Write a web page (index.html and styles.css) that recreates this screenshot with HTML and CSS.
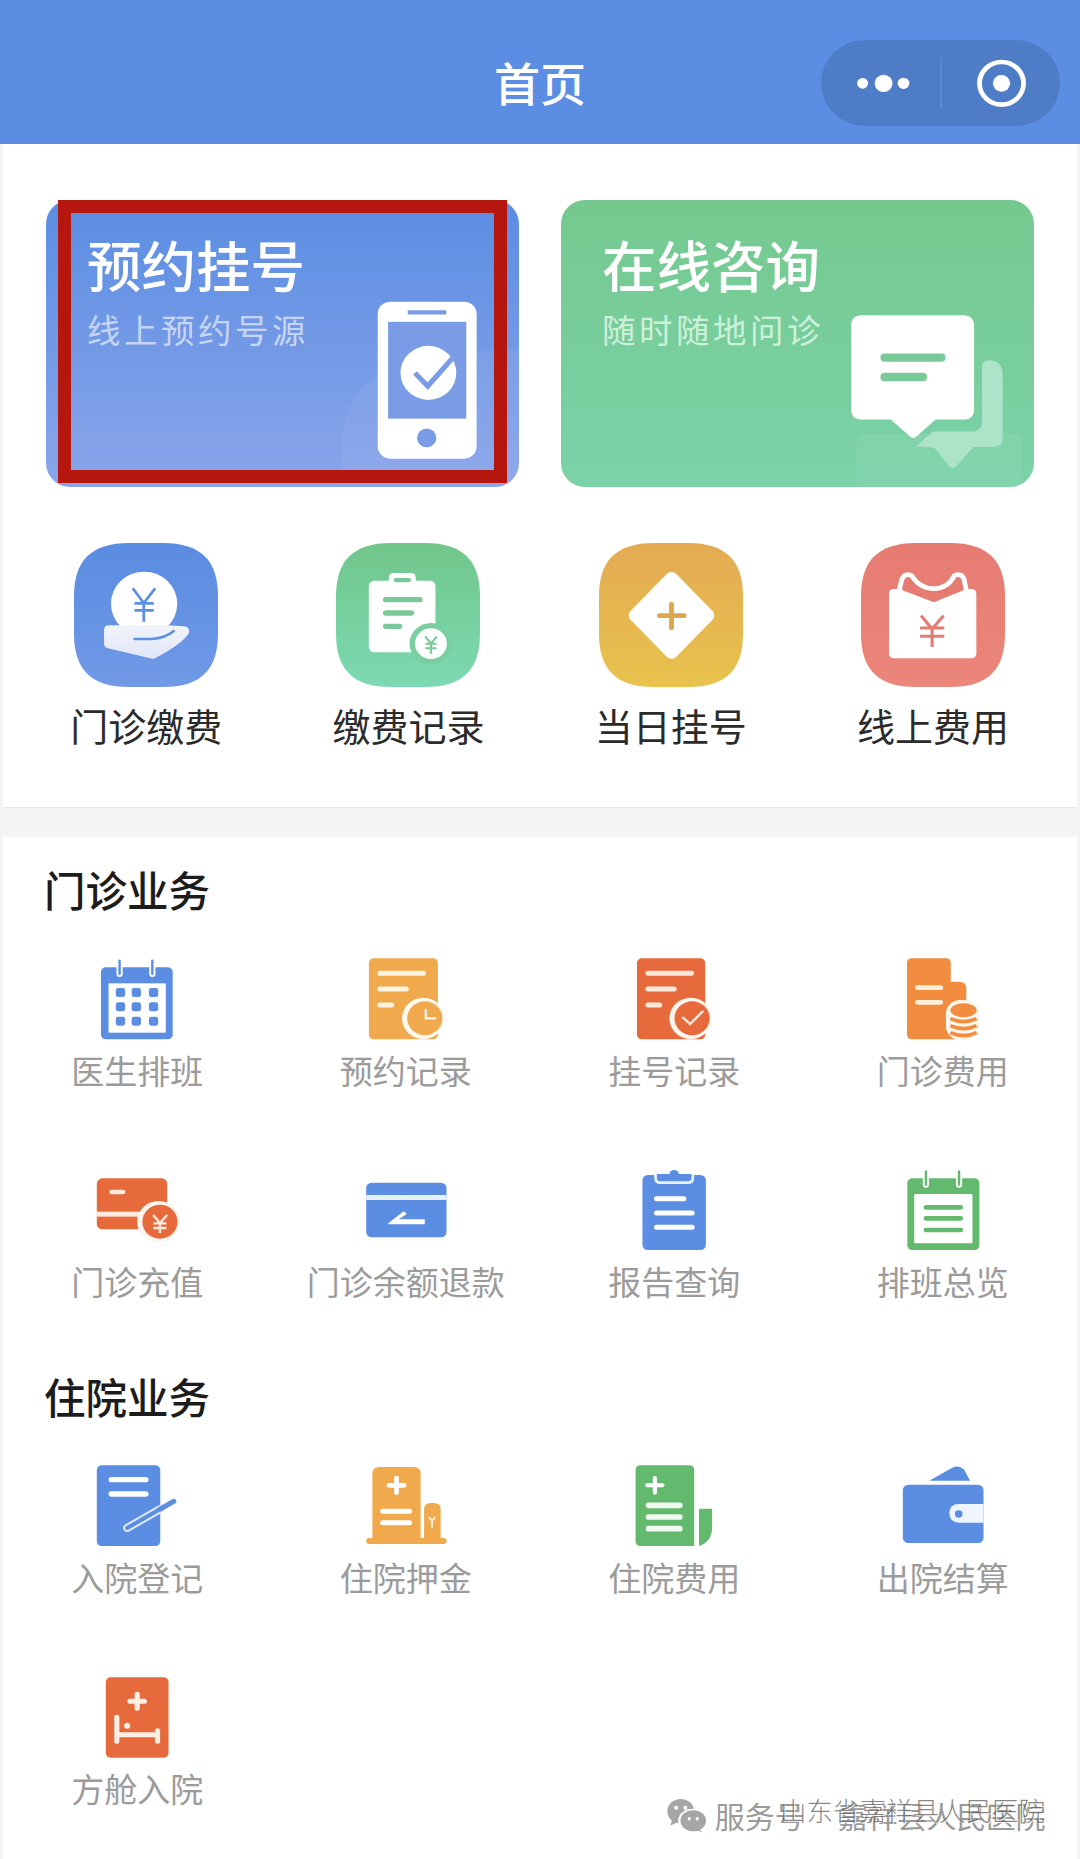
FILE: index.html
```html
<!DOCTYPE html>
<html lang="zh-CN">
<head>
<meta charset="utf-8">
<title>首页</title>
<link rel="stylesheet" href="styles.css">
</head>
<body>
<header class="topbar">
  <h1 class="topbar-title">首页</h1>
  <svg class="capsule" viewBox="815 120 695 258" preserveAspectRatio="none" aria-hidden="true">
    <rect x="815" y="120" width="695" height="258" rx="129" fill="#4e7cc7"/>
    <circle cx="936" cy="250" r="16" fill="#fff"/>
    <circle cx="997" cy="250" r="26" fill="#fff"/>
    <circle cx="1055" cy="250" r="17" fill="#fff"/>
    <rect x="1163" y="172" width="3" height="153" fill="#6c93d3"/>
    <circle cx="1340" cy="250" r="64" fill="none" stroke="#fff" stroke-width="14"/>
    <circle cx="1340" cy="250" r="25" fill="#fff"/>
  </svg>
</header>

<main class="page">
  <section class="panel panel-top">
    <div class="cards">
      <a class="card card-blue">
        <svg class="card-art" viewBox="135 600 1373 860" preserveAspectRatio="none" aria-hidden="true">
          <path d="M995 1450v-140q10-110 70-160 70-70 170-85 130-10 273-20v405z" fill="#fff" opacity=".05"/>
          <rect x="1098" y="905" width="287" height="470" rx="36" fill="#fff"/>
          <rect x="1128" y="965" width="227" height="290" fill="#7a9ce6"/>
          <rect x="1185" y="930" width="112" height="13" rx="3" fill="#7a9ce6"/>
          <circle cx="1240" cy="1313" r="28" fill="#7a9ce6"/>
          <circle cx="1245" cy="1118" r="81" fill="#fff"/>
          <path d="M1206 1118l37 40 72-84" fill="none" stroke="#7a9ce6" stroke-width="15"/>
        </svg>
        <h2 class="card-title">预约挂号</h2>
        <p class="card-sub">线上预约号源</p>
        <span class="card-mark"></span>
      </a>
      <a class="card card-green">
        <svg class="card-art" viewBox="62 600 1374 860" preserveAspectRatio="none" aria-hidden="true">
          <path d="M920 1460v-130q0-30 30-30h450v160z" fill="#fff" opacity=".06"/>
          <path d="M1285 1100q0-20 20-20 40 0 40 45v190q0 25-25 25h-60l-50 58q-10 8-20 0l-42-54q-15-6-55-4 30-30 50-46h110q32 0 32-32z" fill="#ade3c8"/>
          <path d="M935 945h295q32 0 32 32v250q0 31-32 31h-80l-55 50q-10 10-20 0l-55-50H935q-30 0-30-31V977q0-32 30-32z" fill="#fff"/>
          <rect x="990" y="1060" width="189" height="25" rx="12" fill="#79ca98"/>
          <rect x="990" y="1118" width="135" height="25" rx="12" fill="#79ca98"/>
        </svg>
        <h2 class="card-title">在线咨询</h2>
        <p class="card-sub">随时随地问诊</p>
      </a>
    </div>

    <div class="quick">
      <a class="quick-item">
        <svg class="quick-icon" viewBox="215 70 417 432" preserveAspectRatio="none" aria-hidden="true">
          <defs>
            <linearGradient id="qBlue" x1="0" y1="0" x2="0" y2="1"><stop offset="0" stop-color="#5a8ce1"/><stop offset="1" stop-color="#7199e6"/></linearGradient>
            <linearGradient id="qHand" x1="0" y1="0" x2="0" y2="1"><stop offset="0" stop-color="#f2f4fb"/><stop offset="1" stop-color="#dfe6f6"/></linearGradient>
          </defs>
          <path d="M160 0H257C370 0 417 55 417 160V272C417 377 370 432 257 432H160C47 432 0 377 0 272V160C0 55 47 0 160 0Z" transform="translate(215 70)" fill="url(#qBlue)"/>
          <circle cx="418" cy="252" r="96" fill="#fff"/>
          <path d="M385 206l32 44 33-44M417 250v56M390 251h56M390 272h56" fill="none" stroke="#5f8fe2" stroke-width="8"/>
          <path d="M316 317h170l44 3q20-2 18 20-20 34-103 78l-135-33q-10-5-8-20l0-34q0-14 14-14z" fill="url(#qHand)"/>
          <path d="M390 358h50q40-3 64-24" fill="none" stroke="#5f8fe2" stroke-width="7" stroke-linecap="round"/>
        </svg>
        <span class="quick-label">门诊缴费</span>
      </a>
      <a class="quick-item">
        <svg class="quick-icon" viewBox="977 70 417 432" preserveAspectRatio="none" aria-hidden="true">
          <defs>
            <linearGradient id="qGreen" x1="0" y1="0" x2="0" y2="1"><stop offset="0" stop-color="#71c68a"/><stop offset="1" stop-color="#7cd9b2"/></linearGradient>
          </defs>
          <path d="M160 0H257C370 0 417 55 417 160V272C417 377 370 432 257 432H160C47 432 0 377 0 272V160C0 55 47 0 160 0Z" transform="translate(977 70)" fill="url(#qGreen)"/>
          <rect x="1072" y="183" width="193" height="215" rx="16" fill="#fff"/>
          <rect x="1130" y="160" width="78" height="40" rx="14" fill="#fff"/>
          <rect x="1144" y="175" width="50" height="13" rx="6" fill="#79ca98"/>
          <path d="M1121 240h99M1121 280h74M1121 320h40" stroke="#79ca98" stroke-width="16" stroke-linecap="round"/>
          <circle cx="1252" cy="372" r="62" fill="#79cf9f"/>
          <circle cx="1252" cy="372" r="46" fill="#fff"/>
          <path d="M1235 350l17 22 17-22M1252 372v30M1236 372h32M1236 386h32" fill="none" stroke="#79ca98" stroke-width="6"/>
        </svg>
        <span class="quick-label">缴费记录</span>
      </a>
      <a class="quick-item">
        <svg class="quick-icon" viewBox="174 70 417 432" preserveAspectRatio="none" aria-hidden="true">
          <defs>
            <linearGradient id="qGold" x1="0" y1="0" x2="0" y2="1"><stop offset="0" stop-color="#e4aa53"/><stop offset="1" stop-color="#e8c34d"/></linearGradient>
          </defs>
          <path d="M160 0H257C370 0 417 55 417 160V272C417 377 370 432 257 432H160C47 432 0 377 0 272V160C0 55 47 0 160 0Z" transform="translate(174 70)" fill="url(#qGold)"/>
          <path d="M384 176l105 111-105 111-105-111z" fill="#fff" stroke="#fff" stroke-width="38" stroke-linejoin="round"/>
          <path d="M349 288h72M384 253v72" stroke="#dca84e" stroke-width="14" stroke-linecap="round"/>
        </svg>
        <span class="quick-label">当日挂号</span>
      </a>
      <a class="quick-item">
        <svg class="quick-icon" viewBox="934 70 417 432" preserveAspectRatio="none" aria-hidden="true">
          <defs>
            <linearGradient id="qRed" x1="0" y1="0" x2="0" y2="1"><stop offset="0" stop-color="#e67b72"/><stop offset="1" stop-color="#eb867a"/></linearGradient>
          </defs>
          <path d="M160 0H257C370 0 417 55 417 160V272C417 377 370 432 257 432H160C47 432 0 377 0 272V160C0 55 47 0 160 0Z" transform="translate(934 70)" fill="url(#qRed)"/>
          <rect x="1015" y="208" width="253" height="208" rx="14" fill="#fff"/>
          <path d="M1054 190q6-24 26-18 24 40 65 40t60-40q20-6 26 18v22l-86 36-91-36z" fill="#e67b72"/>
          <path d="M1044 215l8-35q8-20 28-13 24 40 65 40t60-40q20-7 28 13l6 35" fill="none" stroke="#fff" stroke-width="14" stroke-linejoin="round"/>
          <path d="M1108 288l32 40 33-40M1140 328v54M1105 325h70M1105 350h70" fill="none" stroke="#e67b72" stroke-width="9"/>
        </svg>
        <span class="quick-label">线上费用</span>
      </a>
    </div>
  </section>

  <section class="panel panel-list">
    <h3 class="group-title">门诊业务</h3>
    <div class="grid">
      <a class="grid-item">
        <svg class="grid-icon" viewBox="239 318 319 261" preserveAspectRatio="none" aria-hidden="true">
          <rect x="294" y="352" width="208" height="216" rx="14" fill="#5b8de2"/>
          <rect x="316" y="400" width="166" height="148" fill="#fff"/>
          <path d="M348 332v40M443 332v40" stroke="#fff" stroke-width="18" stroke-linecap="round"/>
          <path d="M348 332v40M443 332v40" stroke="#5b8de2" stroke-width="7" stroke-linecap="round"/>
          <g fill="#5b8de2">
            <rect x="337" y="414" width="27" height="27" rx="7"/><rect x="383" y="414" width="27" height="27" rx="7"/><rect x="433" y="414" width="27" height="27" rx="7"/>
            <rect x="337" y="457" width="27" height="27" rx="7"/><rect x="383" y="457" width="27" height="27" rx="7"/><rect x="433" y="457" width="27" height="27" rx="7"/>
            <rect x="337" y="500" width="27" height="27" rx="7"/><rect x="383" y="500" width="27" height="27" rx="7"/><rect x="433" y="500" width="27" height="27" rx="7"/>
          </g>
        </svg>
        <span class="grid-label">医生排班</span>
      </a>
      <a class="grid-item">
        <svg class="grid-icon" viewBox="1018 318 319 261" preserveAspectRatio="none" aria-hidden="true">
          <rect x="1070" y="325" width="200" height="243" rx="14" fill="#f0a94c"/>
          <path d="M1102 370h126M1102 417h76M1102 465h34" stroke="#fff4e0" stroke-width="15" stroke-linecap="round"/>
          <circle cx="1228" cy="505" r="62" fill="#fffaf0"/>
          <circle cx="1232" cy="505" r="51" fill="#f0a94c"/>
          <path d="M1235 480v25h27" fill="none" stroke="#fff4e0" stroke-width="7" stroke-linecap="round"/>
        </svg>
        <span class="grid-label">预约记录</span>
      </a>
      <a class="grid-item">
        <svg class="grid-icon" viewBox="230 318 319 261" preserveAspectRatio="none" aria-hidden="true">
          <rect x="282" y="325" width="198" height="243" rx="14" fill="#e76a3d"/>
          <path d="M314 370h126M314 417h76M314 465h34" stroke="#fde8dc" stroke-width="15" stroke-linecap="round"/>
          <circle cx="438" cy="505" r="62" fill="#fff5ef"/>
          <circle cx="442" cy="505" r="51" fill="#e76a3d"/>
          <path d="M416 503l20 19 36-37" fill="none" stroke="#fde8dc" stroke-width="7" stroke-linecap="round"/>
        </svg>
        <span class="grid-label">挂号记录</span>
      </a>
      <a class="grid-item">
        <svg class="grid-icon" viewBox="1010 318 319 261" preserveAspectRatio="none" aria-hidden="true">
          <path d="M1080 325h98q14 0 14 15v55h23q22 0 22 20v153h-157q-15 0-15-15V340q0-15 15-15z" fill="#f28c3f"/>
          <path d="M1095 413h68M1095 457h68" stroke="#fdeeda" stroke-width="14" stroke-linecap="round"/>
          <rect x="1178" y="450" width="97" height="120" rx="42" fill="#fff7ec"/>
          <ellipse cx="1229" cy="481" rx="38" ry="21" fill="#f28c3f"/>
          <path d="M1191 506q38 18 76 0M1191 527q38 18 76 0M1191 548q38 18 76 0" fill="none" stroke="#f28c3f" stroke-width="11"/>
        </svg>
        <span class="grid-label">门诊费用</span>
      </a>
      <a class="grid-item">
        <svg class="grid-icon" viewBox="239 951 319 261" preserveAspectRatio="none" aria-hidden="true">
          <rect x="282" y="985" width="204" height="153" rx="16" fill="#e76a3d"/>
          <rect x="282" y="1085" width="204" height="15" fill="#fde8dc"/>
          <path d="M325 1026h33" stroke="#fde8dc" stroke-width="14" stroke-linecap="round"/>
          <circle cx="461" cy="1115" r="62" fill="#fff5ef"/>
          <circle cx="465" cy="1115" r="51" fill="#e76a3d"/>
          <path d="M445 1095l20 24 21-24M465 1119v30M446 1120h38M446 1134h38" fill="none" stroke="#fde8dc" stroke-width="7"/>
        </svg>
        <span class="grid-label">门诊充值</span>
      </a>
      <a class="grid-item">
        <svg class="grid-icon" viewBox="1018 951 319 261" preserveAspectRatio="none" aria-hidden="true">
          <rect x="1062" y="998" width="233" height="164" rx="16" fill="#5b8de2"/>
          <rect x="1062" y="1035" width="233" height="15" fill="#e6f1ff"/>
          <path d="M1126 1120l45-36 9 8-24 16h76v15h-106z" fill="#fff"/>
        </svg>
        <span class="grid-label">门诊余额退款</span>
      </a>
      <a class="grid-item">
        <svg class="grid-icon" viewBox="230 951 319 261" preserveAspectRatio="none" aria-hidden="true">
          <rect x="298" y="975" width="184" height="225" rx="16" fill="#5b8de2"/>
          <circle cx="390" cy="974" r="14" fill="#5b8de2"/>
          <path d="M336 972v12q0 14 14 14h80q14 0 14-14v-12" fill="#5b8de2" stroke="#e6f1ff" stroke-width="8"/>
          <path d="M339 1046h79M339 1089h103M339 1132h103" stroke="#fff" stroke-width="15" stroke-linecap="round"/>
        </svg>
        <span class="grid-label">报告查询</span>
      </a>
      <a class="grid-item">
        <svg class="grid-icon" viewBox="1010 951 319 261" preserveAspectRatio="none" aria-hidden="true">
          <rect x="1066" y="985" width="209" height="215" rx="14" fill="#63ba6f"/>
          <rect x="1086" y="1032" width="169" height="148" rx="4" fill="#fff"/>
          <path d="M1120 964v40M1216 964v40" stroke="#fff" stroke-width="18" stroke-linecap="round"/>
          <path d="M1120 964v40M1216 964v40" stroke="#63ba6f" stroke-width="7" stroke-linecap="round"/>
          <path d="M1120 1072h101M1120 1105h101M1120 1140h101" stroke="#63ba6f" stroke-width="14" stroke-linecap="round"/>
        </svg>
        <span class="grid-label">排班总览</span>
      </a>
    </div>

    <h3 class="group-title group-title-next">住院业务</h3>
    <div class="grid">
      <a class="grid-item">
        <svg class="grid-icon" viewBox="239 343 319 261" preserveAspectRatio="none" aria-hidden="true">
          <rect x="282" y="350" width="184" height="242" rx="14" fill="#5b8de2"/>
          <path d="M324 393h100M324 436h100" stroke="#fff" stroke-width="16" stroke-linecap="round"/>
          <path d="M370 538l96-57" stroke="#dbe8fd" stroke-width="24" stroke-linecap="round"/>
          <path d="M370 538l135-80" stroke="#5b8de2" stroke-width="12" stroke-linecap="round"/>
          <path d="M466 481l39-23" stroke="#5b8de2" stroke-width="15" stroke-linecap="round"/>
        </svg>
        <span class="grid-label">入院登记</span>
      </a>
      <a class="grid-item">
        <svg class="grid-icon" viewBox="1018 343 319 261" preserveAspectRatio="none" aria-hidden="true">
          <path d="M1100 355h100q20 0 20 20v197h-140V375q0-20 20-20z" fill="#f0a94c"/>
          <path d="M1230 572V482q0-19 19-19h10q19 0 19 19v90z" fill="#f0a94c"/>
          <rect x="1062" y="568" width="233" height="18" rx="9" fill="#f0a94c"/>
          <path d="M1128 410h44M1150 388v44" stroke="#fff" stroke-width="14" stroke-linecap="round"/>
          <path d="M1110 488h78M1110 522h78" stroke="#fff" stroke-width="15" stroke-linecap="round"/>
          <path d="M1244 505l9 12 9-12M1253 517v22" fill="none" stroke="#fdeeda" stroke-width="6"/>
        </svg>
        <span class="grid-label">住院押金</span>
      </a>
      <a class="grid-item">
        <svg class="grid-icon" viewBox="230 343 319 261" preserveAspectRatio="none" aria-hidden="true">
          <path d="M292 350h142q14 0 14 14v228H292q-14 0-14-14V364q0-14 14-14z" fill="#63ba6f"/>
          <path d="M462 480h38v55q0 45-38 57z" fill="#63ba6f"/>
          <path d="M312 410h44M334 388v44" stroke="#fff" stroke-width="12" stroke-linecap="round"/>
          <path d="M316 470h90M316 505h90M316 540h90" stroke="#f1fbf2" stroke-width="17" stroke-linecap="round"/>
        </svg>
        <span class="grid-label">住院费用</span>
      </a>
      <a class="grid-item">
        <svg class="grid-icon" viewBox="1010 343 319 261" preserveAspectRatio="none" aria-hidden="true">
          <path d="M1130 396l65-38q20-10 35 4l18 34z" fill="#5b8de2"/>
          <rect x="1053" y="408" width="234" height="175" rx="16" fill="#5b8de2"/>
          <path d="M1287 466h-71q-28 0-28 28t28 28h71z" fill="#eef5ff"/>
          <circle cx="1215" cy="496" r="11" fill="#5b8de2"/>
        </svg>
        <span class="grid-label">出院结算</span>
      </a>
      <a class="grid-item">
        <svg class="grid-icon" viewBox="239 973 319 261" preserveAspectRatio="none" aria-hidden="true">
          <rect x="308" y="983" width="182" height="241" rx="14" fill="#e76a3d"/>
          <path d="M378 1055h42M399 1034v42" stroke="#fdeee6" stroke-width="15" stroke-linecap="round"/>
          <path d="M340 1103v72M458 1143v32M340 1155h118" stroke="#fdeee6" stroke-width="15" stroke-linecap="round"/>
          <circle cx="370" cy="1128" r="9" fill="#fdeee6"/>
        </svg>
        <span class="grid-label">方舱入院</span>
      </a>
    </div>
  </section>
</main>

<footer class="source-tag">
  <svg class="source-icon" viewBox="50 28 122 97" preserveAspectRatio="none" aria-hidden="true">
    <ellipse cx="92" cy="64" rx="41" ry="36" fill="#a6a6a6"/>
    <path d="M66 88l-6 18 24-10z" fill="#a6a6a6"/>
    <ellipse cx="128" cy="92" rx="44" ry="35" fill="#fff"/>
    <ellipse cx="130" cy="92" rx="39" ry="31" fill="#a6a6a6"/>
    <path d="M146 114l12 11-22-5z" fill="#a6a6a6"/>
    <circle cx="78" cy="54" r="6" fill="#fff"/>
    <circle cx="106" cy="54" r="6" fill="#fff"/>
    <circle cx="118" cy="86" r="5" fill="#fff"/>
    <circle cx="142" cy="86" r="5" fill="#fff"/>
  </svg>
  <span class="source-type">服务号</span>
  <span class="source-name">嘉祥县人民医院</span>
  <span class="source-full">山东省嘉祥县人民医院</span>
</footer>
</body>
</html>
```

FILE: styles.css
```css
* {
  box-sizing: border-box;
}

html,
body {
  margin: 0;
  padding: 0;
}

body {
  position: relative;
  display: flex;
  flex-direction: column;
  width: 1080px;
  height: 1859px;
  overflow: hidden;
  background: #f4f4f4;
  font-family: "Noto Sans CJK SC", "Noto Sans", sans-serif;
}

h1,
h2,
h3,
p {
  margin: 0;
}

/* Navigation bar */
.topbar {
  flex: none;
  display: flex;
  align-items: center;
  justify-content: center;
  position: relative;
  height: 144px;
  padding-top: 17px;
  background: #5b8de2;
}

.topbar-title {
  font-size: 46px;
  font-weight: 500;
  line-height: 60px;
  color: #fff;
}

.capsule {
  position: absolute;
  top: 40px;
  right: 20px;
  width: 239px;
  height: 86px;
}

/* Page sections */
.page {
  flex: 1;
  display: flex;
  flex-direction: column;
  gap: 29px;
  min-height: 0;
}

.panel {
  margin: 0 3px;
  background: #fff;
}

.panel-top {
  padding: 56px 0 60px;
  border-bottom: 1px solid #e8e8e8;
}

.panel-list {
  flex: 1;
  padding-top: 24px;
}

/* Feature cards */
.cards {
  display: grid;
  grid-template-columns: 473px 473px;
  gap: 42px;
  padding-left: 43px;
}

.card {
  position: relative;
  display: block;
  height: 287px;
  padding: 34px 0 0 41px;
  border-radius: 24px;
  color: #fff;
}

.card-blue {
  background: linear-gradient(180deg, #5b8de2 0%, #8aa5ea 100%);
}

.card-green {
  background: linear-gradient(180deg, #75c98f 0%, #7bd2a8 100%);
}

.card-art {
  position: absolute;
  inset: 0;
  width: 100%;
  height: 100%;
  border-radius: 24px;
}

.card-title {
  position: relative;
  font-size: 54.5px;
  font-weight: 500;
  line-height: 60px;
}

.card-sub {
  position: relative;
  margin-top: 15px;
  font-size: 33.5px;
  line-height: 40px;
  letter-spacing: 3.5px;
  color: rgba(255, 255, 255, 0.62);
}

.card-green .card-sub {
  color: rgba(228, 250, 236, 0.78);
}

/* Annotation frame drawn over the first card */
.card-mark {
  position: absolute;
  top: 0;
  right: 12px;
  bottom: 4px;
  left: 12px;
  border: 13px solid #b5170f;
}

/* Quick entries */
.quick {
  display: grid;
  grid-template-columns: repeat(4, 262.3px);
  margin-top: 56px;
  padding-left: 12px;
}

.quick-item {
  display: flex;
  flex-direction: column;
  align-items: center;
  gap: 16px;
}

.quick-icon {
  display: block;
  width: 144px;
  height: 144px;
}

.quick-label {
  font-size: 38px;
  line-height: 44px;
  color: #2b2b2b;
  white-space: nowrap;
}

/* Service lists */
.group-title {
  padding-left: 41px;
  font-size: 41.5px;
  font-weight: 500;
  line-height: 56px;
  color: #1c1c1c;
}

.group-title-next {
  margin-top: 65px;
}

.grid {
  display: grid;
  grid-template-columns: repeat(4, 1fr);
  row-gap: 75px;
  margin-top: 39px;
}

.grid-item {
  display: flex;
  flex-direction: column;
  align-items: center;
  gap: 5px;
}

.grid-icon {
  display: block;
  width: 110px;
  height: 87px;
}

.grid-label {
  font-size: 33px;
  line-height: 44px;
  color: #9b9b9b;
  white-space: nowrap;
}

/* Account tag over the page corner */
.source-tag {
  position: absolute;
  right: 35px;
  bottom: 22px;
  display: flex;
  align-items: center;
  height: 44px;
  font-size: 30px;
  line-height: 44px;
  color: #9a9a9a;
}

.source-icon {
  width: 40px;
  height: 33px;
  margin-right: 8px;
}

.source-name {
  margin-left: 33px;
  letter-spacing: -0.4px;
}

.source-full {
  position: absolute;
  right: 0;
  top: -5px;
  font-size: 26.5px;
  font-weight: 300;
  white-space: nowrap;
  color: rgba(95, 95, 95, 0.75);
  text-shadow: 1px 1px 0 rgba(255, 255, 255, 0.8);
}
```
